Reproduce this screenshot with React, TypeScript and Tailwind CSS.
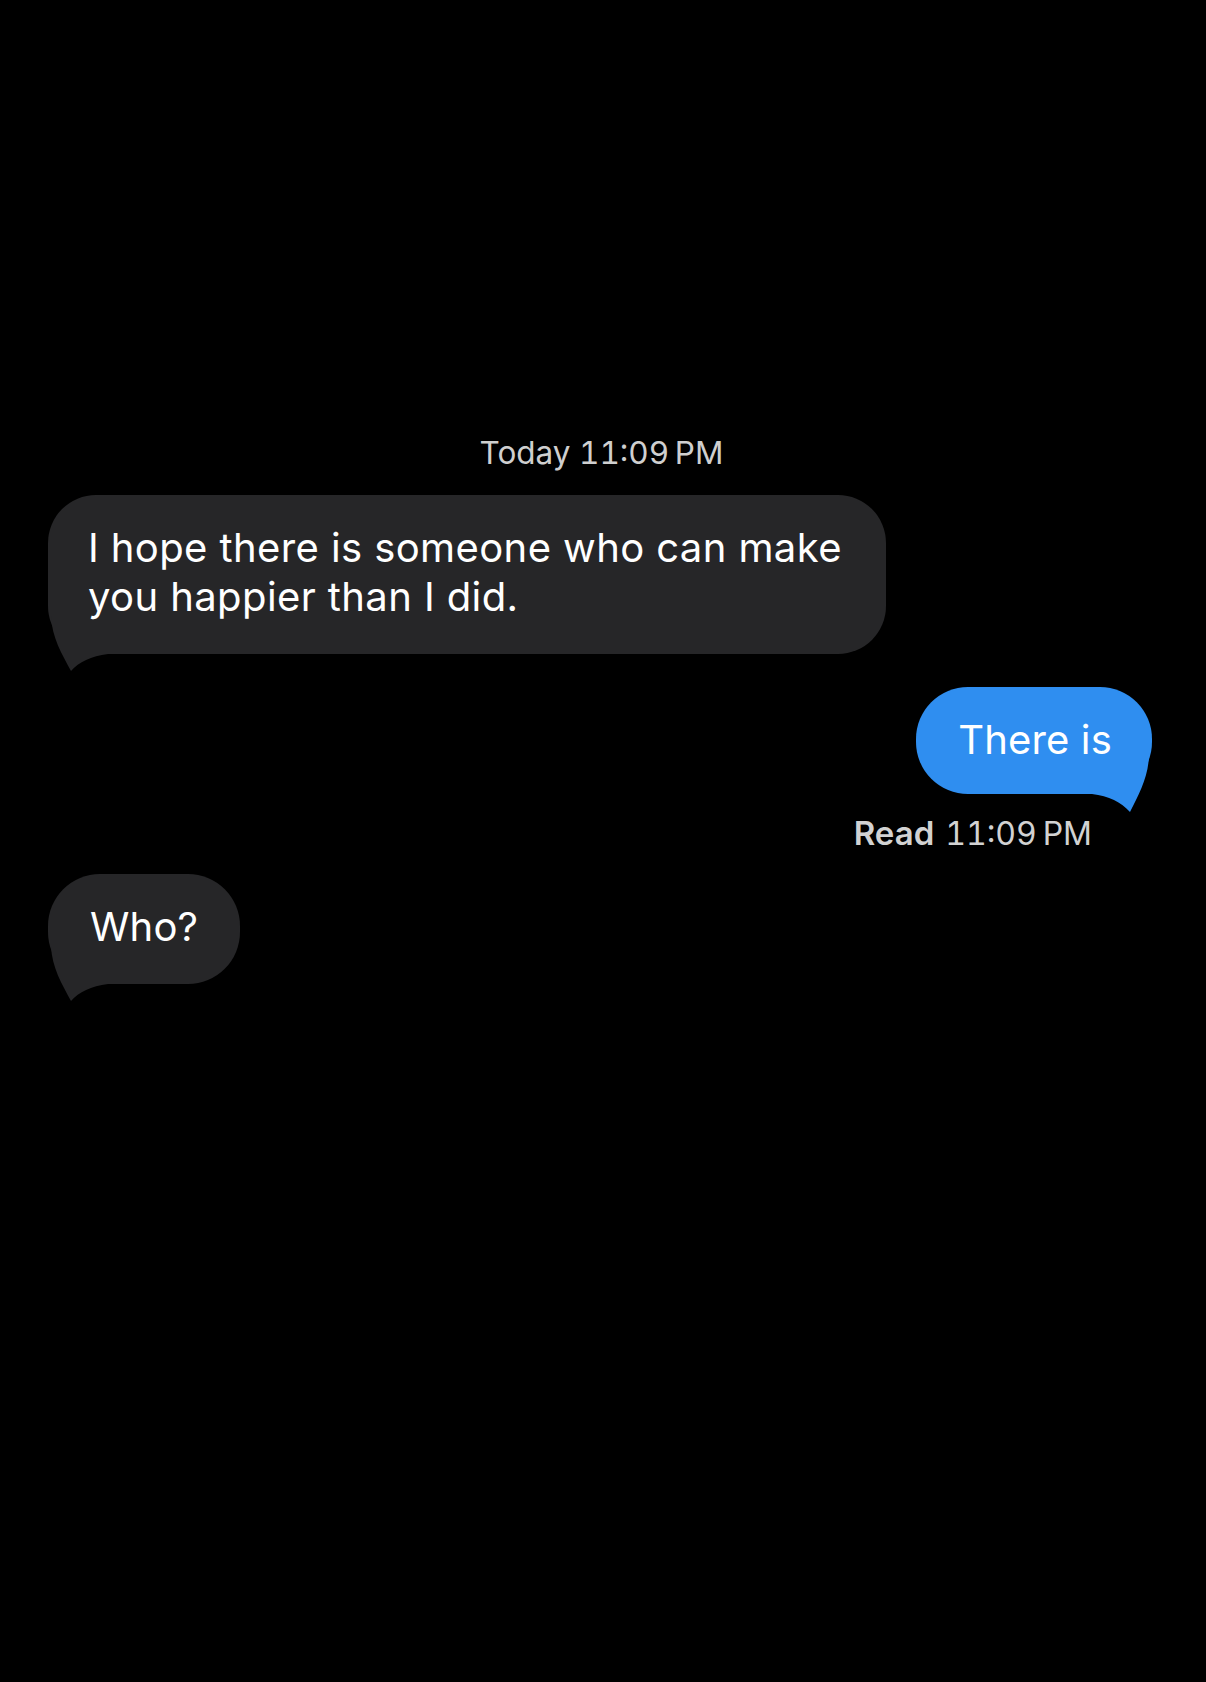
import React from "react";

const GRAY = "#262628";
const BLUE = "#2f8ef0";

function LeftTail() {
  return (
    <svg
      className="absolute left-0 bottom-[-18px]"
      width="60"
      height="56"
      viewBox="0 0 60 56"
      aria-hidden="true"
    >
      <path d="M3 0 C4 22 14 38 23 55 C31 46 43 40 60 38 L60 0 Z" fill={GRAY} />
    </svg>
  );
}

function RightTail() {
  return (
    <svg
      className="absolute right-0 bottom-[-19px]"
      width="60"
      height="57"
      viewBox="0 0 60 57"
      aria-hidden="true"
    >
      <path d="M57 0 C56 22 47 38 38 56 C29 46 17 40 0 38 L0 0 Z" fill={BLUE} />
    </svg>
  );
}

export default function App() {
  return (
    <div
      className="min-h-[1682px] w-full bg-black flex flex-col pt-[434px] text-white"
      style={{ fontFamily: "Inter, 'Liberation Sans', sans-serif" }}
    >
      <div className="text-center text-[31.5px] leading-[38px] text-[#cfcfcf] tabular-nums ml-[-3px]">
        Today 11:09&#8201;PM
      </div>

      <div className="pl-[48px] mt-[23px] flex">
        <div className="relative max-w-[838px] rounded-[48px] bg-[#262628] px-[40px] pt-[28px] pb-[33px] text-[40px] leading-[49px] tracking-[0.01em]">
          <LeftTail />
          <span className="relative">I hope there is someone who can make you happier than I did.</span>
        </div>
      </div>

      <div className="pr-[54px] mt-[33px] flex justify-end">
        <div className="relative rounded-[52px] bg-[#2f8ef0] pl-[42px] pr-[40px] pt-[28px] pb-[30px] text-[40px] leading-[49px] tracking-[0.004em]">
          <RightTail />
          <span className="relative">There is</span>
        </div>
      </div>

      <div className="pr-[114px] mt-[20px] flex justify-end items-baseline text-[33px] leading-[38px] text-[#d2d2d2] tabular-nums">
        <span className="font-semibold">Read</span>
        <span className="ml-[11px] text-[32px]">11:09&#8201;PM</span>
      </div>

      <div className="pl-[48px] mt-[21px] flex">
        <div className="relative rounded-[52px] bg-[#262628] px-[42px] pt-[28px] pb-[33px] text-[40px] leading-[49px] tracking-[0.004em]">
          <LeftTail />
          <span className="relative">Who?</span>
        </div>
      </div>
    </div>
  );
}
